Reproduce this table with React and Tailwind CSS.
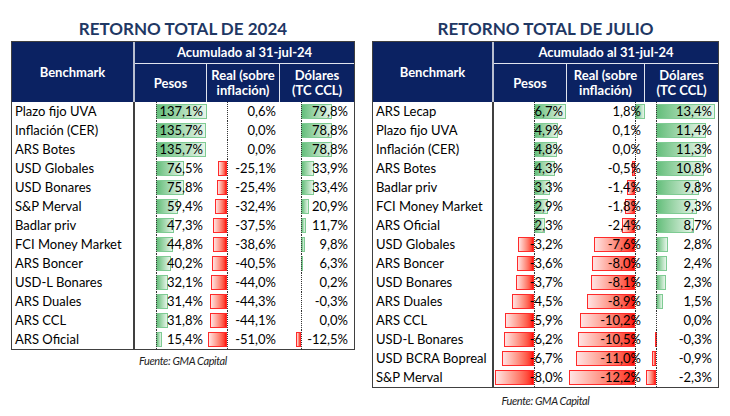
const left = {
  title: "RETORNO TOTAL DE 2024",
  cols: [124, 73, 73, 74],
  axes: [
    { axis: 21, scale: 0.372 },
    { axis: 20, scale: 0.375 },
    { axis: 21, scale: 0.39 },
  ],
  rows: [
    ["Plazo fijo UVA", 137.1, 0.6, 79.8],
    ["Inflación (CER)", 135.7, 0.0, 78.8],
    ["ARS Botes", 135.7, 0.0, 78.8],
    ["USD Globales", 76.5, -25.1, 33.9],
    ["USD Bonares", 75.8, -25.4, 33.4],
    ["S&P Merval", 59.4, -32.4, 20.9],
    ["Badlar priv", 47.3, -37.5, 11.7],
    ["FCI Money Market", 44.8, -38.6, 9.8],
    ["ARS Boncer", 40.2, -40.5, 6.3],
    ["USD-L Bonares", 32.1, -44.0, 0.2],
    ["ARS Duales", 31.4, -44.3, -0.3],
    ["ARS CCL", 31.8, -44.1, 0.0],
    ["ARS Oficial", 15.4, -51.0, -12.5],
  ],
}

const right = {
  title: "RETORNO TOTAL DE JULIO",
  cols: [122, 74, 78, 73],
  axes: [
    { axis: 40, scale: 4.85 },
    { axis: 68, scale: 5.4 },
    { axis: 11, scale: 4.4 },
  ],
  rows: [
    ["ARS Lecap", 6.7, 1.8, 13.4],
    ["Plazo fijo UVA", 4.9, 0.1, 11.4],
    ["Inflación (CER)", 4.8, 0.0, 11.3],
    ["ARS Botes", 4.3, -0.5, 10.8],
    ["Badlar priv", 3.3, -1.4, 9.8],
    ["FCI Money Market", 2.9, -1.8, 9.3],
    ["ARS Oficial", 2.3, -2.4, 8.7],
    ["USD Globales", -3.2, -7.6, 2.8],
    ["ARS Boncer", -3.6, -8.0, 2.4],
    ["USD Bonares", -3.7, -8.1, 2.3],
    ["ARS Duales", -4.5, -8.9, 1.5],
    ["ARS CCL", -5.9, -10.2, 0.0],
    ["USD-L Bonares", -6.2, -10.5, -0.3],
    ["USD BCRA Bopreal", -6.7, -11.0, -0.9],
    ["S&P Merval", -8.0, -12.2, -2.3],
  ],
}

const fmt = (v) => v.toFixed(1).replace(".", ",") + "%"

function BarCell({ v, axis, scale, width }) {
  const w = Math.abs(v) * scale
  const show = w >= 1
  return (
    <div className="relative h-[19px]" style={{ width }}>
      {show && v > 0 && (
        <div
          className="absolute top-[2px] bottom-[2px] border border-[#7fcb93] bg-linear-to-r from-[#63be7b] to-[#e6f5ea]"
          style={{ left: axis, width: w }}
        />
      )}
      {show && v < 0 && (
        <div
          className="absolute top-[2px] bottom-[2px] border border-[#ff2a2a] bg-linear-to-l from-[#ff0000] to-[#ffe3e3]"
          style={{ left: axis - w, width: w }}
        />
      )}
      <div
        className="absolute top-0 bottom-0 border-l border-dotted border-[#333]"
        style={{ left: axis }}
      />
      <div className="relative text-right pr-[4px] leading-[19px]">{fmt(v)}</div>
    </div>
  )
}

function Table({ data, fuenteClass }) {
  const [c0, c1, c2, c3] = data.cols
  const total = c0 + c1 + c2 + c3
  return (
    <div style={{ width: total }}>
      <h2 className="text-center text-[17px] font-bold text-[#1f3864] leading-[20px] mt-[19px] mb-[2px]">
        {data.title}
      </h2>
      <div className="border border-[#404040]">
        <div className="flex h-[60px] bg-[#0b2262] text-white font-bold text-[13px] leading-[15px]">
          <div
            className="flex items-center justify-center border-r-2 border-[#b9bfd0]"
            style={{ width: c0 - 1 }}
          >
            Benchmark
          </div>
          <div className="flex-1 flex flex-col">
            <div className="h-[22px] flex items-center justify-center border-b border-[#e0e4ee]">
              Acumulado al 31-jul-24
            </div>
            <div className="flex flex-1">
              <div
                className="flex items-center justify-center border-r border-[#e0e4ee]"
                style={{ width: c1 - 1 }}
              >
                Pesos
              </div>
              <div
                className="flex items-center justify-center text-center border-r border-[#e0e4ee]"
                style={{ width: c2 }}
              >
                Real (sobre
                <br />
                inflación)
              </div>
              <div className="flex-1 flex items-center justify-center text-center">
                Dólares
                <br />
                (TC CCL)
              </div>
            </div>
          </div>
        </div>
        <div className="flex text-[13px] text-black">
          <div className="border-r-2 border-[#404040]" style={{ width: c0 - 1 }}>
            {data.rows.map((r) => (
              <div key={r[0]} className="h-[19px] leading-[19px] pl-[3px] whitespace-nowrap">
                {r[0]}
              </div>
            ))}
          </div>
          {[1, 2, 3].map((ci) => (
            <div key={ci} className="flex flex-col">
              {data.rows.map((r) => (
                <BarCell
                  key={r[0]}
                  v={r[ci]}
                  axis={data.axes[ci - 1].axis}
                  scale={data.axes[ci - 1].scale}
                  width={ci === 1 ? c1 - 1 : ci === 2 ? c2 : c3 - 2}
                />
              ))}
            </div>
          ))}
        </div>
      </div>
      <p className={"text-center text-[11px] leading-[14px] italic tracking-[-0.4px] text-[#222] " + fuenteClass}>
        Fuente: GMA Capital
      </p>
    </div>
  )
}

export default function App() {
  return (
    <div
      className="w-[730px] h-[416px] bg-white flex items-start gap-[17px] pl-[11px] overflow-hidden"
      style={{ fontFamily: "Lato, 'Open Sans', sans-serif" }}
    >
      <Table data={left} fuenteClass="mt-[4px]" />
      <Table data={right} fuenteClass="mt-[6px]" />
    </div>
  )
}
